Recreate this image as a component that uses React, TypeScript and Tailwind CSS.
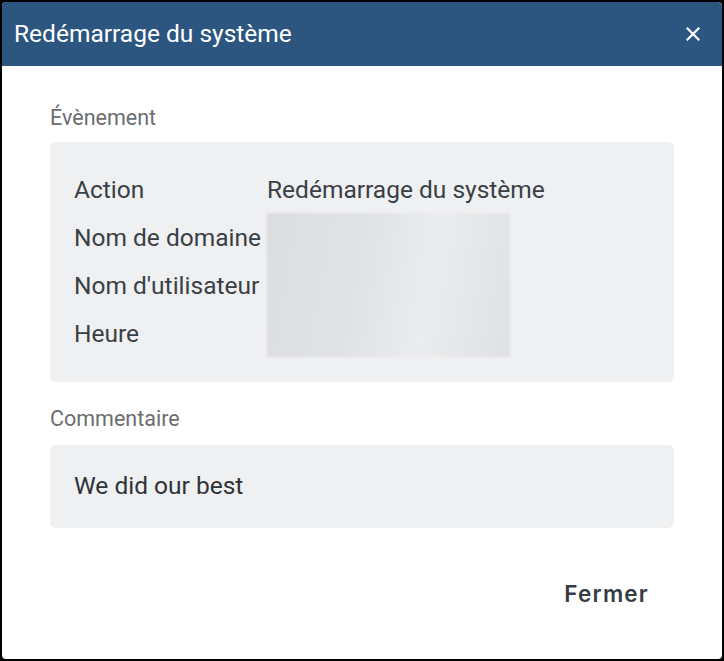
import React from "react";

const rows = ["Action", "Nom de domaine", "Nom d'utilisateur", "Heure"];

export default function App() {
  return (
    <div className="h-[661px] w-[724px] bg-black p-[2px]" style={{ fontFamily: "Roboto, 'Noto Sans', sans-serif" }}>
      <div className="flex h-full w-full flex-col overflow-hidden rounded-[4px] bg-white">
        <header className="flex h-[64px] shrink-0 items-center justify-between bg-[#2c5680] pl-[12px] pr-[22px]">
          <h1 className="text-[24.5px] font-normal leading-none text-white">Redémarrage du système</h1>
          <button className="text-white">
            <svg width="14" height="14" viewBox="0 0 14 14" fill="none" stroke="currentColor" strokeWidth="2.2" strokeLinecap="square">
              <path d="M1.5 1.5 12.5 12.5M12.5 1.5 1.5 12.5" />
            </svg>
          </button>
        </header>

        <div className="flex flex-1 flex-col px-[48px] pt-[39px]">
          <div className="text-[21.5px] leading-[26px] text-[#6b6d70]">Évènement</div>
          <div className="mt-[11px] rounded-[6px] bg-[#eff0f2] px-[24px] py-[24px] text-[24.5px] text-[#3a3f45]">
            <div className="grid grid-cols-[193px_1fr] grid-rows-[48px_48px_48px_48px] items-center">
              <div className="whitespace-nowrap">{rows[0]}</div>
              <div className="whitespace-nowrap">Redémarrage du système</div>
              <div className="whitespace-nowrap">{rows[1]}</div>
              <div className="row-span-3 self-start">
                <div className="mt-[-1px] h-[144px] w-[243px] bg-[linear-gradient(100deg,#dcdddf_0%,#e2e3e5_40%,#ebeced_65%,#e0e1e3_100%)] blur-[1px]" />
              </div>
              <div className="whitespace-nowrap">{rows[2]}</div>
              <div className="whitespace-nowrap">{rows[3]}</div>
            </div>
          </div>

          <div className="mt-[24px] text-[21.5px] leading-[26px] text-[#6b6d70]">Commentaire</div>
          <div className="mt-[13px] flex h-[83px] items-center rounded-[6px] bg-[#eff0f2] px-[24px] text-[24.5px] text-[#2f3338]">
            We did our best
          </div>

          <div className="mt-[52px] flex justify-end pr-[25px]">
            <button
              className="text-[22.5px] font-semibold leading-[28px] tracking-[1.2px] text-[#363c44]"
              style={{ fontFamily: "Inter, Roboto, sans-serif" }}
            >
              Fermer
            </button>
          </div>
        </div>
      </div>
    </div>
  );
}
